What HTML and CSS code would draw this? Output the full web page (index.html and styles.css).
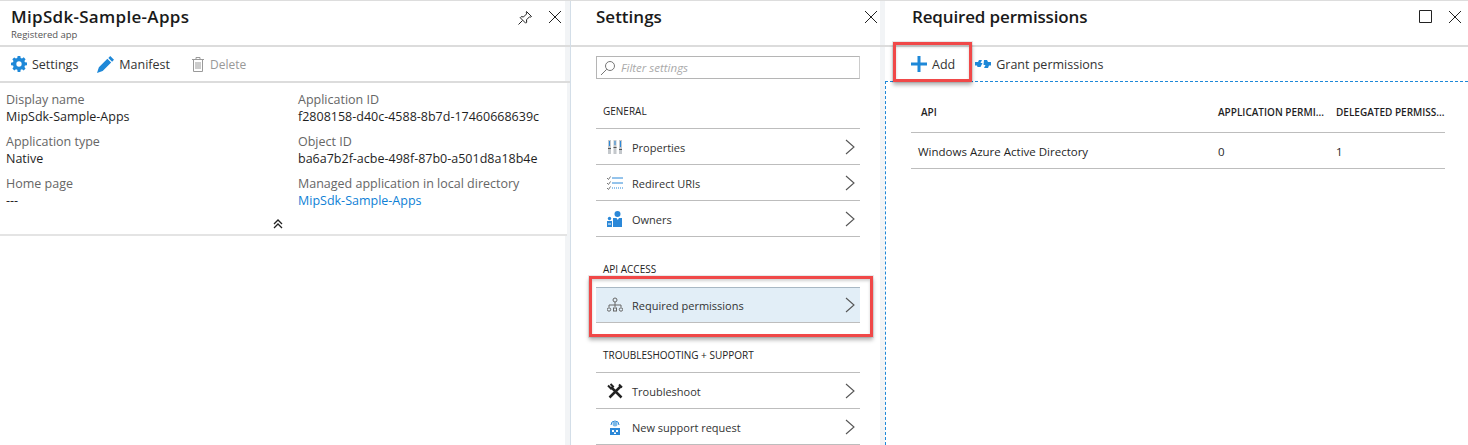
FILE: index.html
```html
<!DOCTYPE html>
<html lang="en">
<head>
  <meta charset="UTF-8">
  <title>Required permissions</title>
  <link rel="stylesheet" href="styles.css">
</head>
<body>
  <div class="blades">
    <!-- app blade -->
    <section class="blade blade-app">
      <header class="blade-head">
        <div>
          <h2 class="title title-app">MipSdk-Sample-Apps</h2>
          <div class="subtitle">Registered app</div>
        </div>
        <div class="head-icons">
          <svg width="16" height="16" viewBox="0 0 16 16" fill="none" stroke="#222" stroke-width="1"><path d="M9.500 1.500l5 5-1 .6-1-.3-3 3 .2 2.400-1 1-5.500-5.500 1-1 2.400.2 3-3-.3-1zM5.500 10.500L1.500 14.500"/></svg>
          <svg width="14" height="14" viewBox="0 0 14 14" stroke="#222" stroke-width="1"><path d="M1 1l12 12M13 1L1 13"/></svg>
        </div>
      </header>
      <div class="toolbar">
        <span class="tool">
          <svg width="16" height="16" viewBox="0 0 18 18"><path fill="#1e88d8" fill-rule="evenodd" d="M7.500 0h3l.4 2.200 1.500.6 1.900-1.300 2.100 2.100-1.300 1.900.6 1.500 2.300.4v3l-2.300.4-.6 1.500 1.300 1.900-2.100 2.100-1.900-1.300-1.500.6-.4 2.300h-3l-.4-2.300-1.500-.6-1.900 1.300-2.100-2.100 1.300-1.900-.6-1.500L0 10.500v-3l2.200-.4.6-1.500L1.500 3.700l2.100-2.100 1.900 1.300 1.500-.6zM9 6a3 3 0 1 0 0 6 3 3 0 0 0 0-6z"/></svg>
          Settings
        </span>
        <span class="tool">
          <svg width="17" height="17" viewBox="0 0 18 18"><path fill="#1e88d8" d="M14 0l4 4-2 2-4-4zM11 3l4 4-9 9-6 2 2-6z"/></svg>
          Manifest
        </span>
        <span class="tool tool-off">
          <svg width="12" height="15" viewBox="0 0 12 15" fill="none" stroke="#9a9a9a"><path d="M0 2.500h12M4 2.500v-2h4v2M1.500 2.500v12h9v-12M4 5v7M6 5v7M8 5v7"/></svg>
          Delete
        </span>
      </div>
      <div class="essentials">
        <div class="field"><div class="label">Display name</div><div class="value">MipSdk-Sample-Apps</div></div>
        <div class="field"><div class="label">Application ID</div><div class="value">f2808158-d40c-4588-8b7d-17460668639c</div></div>
        <div class="field"><div class="label">Application type</div><div class="value">Native</div></div>
        <div class="field"><div class="label">Object ID</div><div class="value">ba6a7b2f-acbe-498f-87b0-a501d8a18b4e</div></div>
        <div class="field"><div class="label">Home page</div><div class="value">---</div></div>
        <div class="field"><div class="label">Managed application in local directory</div><div class="value link">MipSdk-Sample-Apps</div></div>
        <svg class="collapse" width="10" height="10" viewBox="0 0 10 10" fill="none" stroke="#222" stroke-width="1.300"><path d="M1 5l4-4 4 4M1 9l4-4 4 4"/></svg>
      </div>
    </section>

    <!-- settings blade -->
    <section class="blade blade-settings">
      <header class="blade-head">
        <h2 class="title">Settings</h2>
        <div class="head-icons">
          <svg width="14" height="14" viewBox="0 0 14 14" stroke="#222" stroke-width="1"><path d="M1 1l12 12M13 1L1 13"/></svg>
        </div>
      </header>
      <div class="settings-body">
        <div class="filter">
          <svg width="16" height="16" viewBox="0 0 16 16" fill="none" stroke="#777"><circle cx="10" cy="6" r="4.500"/><path d="M6.800 9.200L1 15"/></svg>
          <span>Filter settings</span>
        </div>
        <div class="group-label">GENERAL</div>
        <div class="menu-row line-top">
          <svg width="16" height="16" viewBox="0 0 16 16"><path fill="#c4c8cc" d="M1 1h3v14h-3zM6.500 1h3v14h-3zM12 1h3v14h-3z"/><path fill="#2b88d8" d="M2 2h1v5h-1zM7.500 2h1v4h-1zM13 2h1v6h-1z"/><path fill="#555" d="M1 9h3v1h-3zM6.500 8h3v1h-3zM12 10h3v1h-3z"/></svg>
          <span>Properties</span>
          <svg class="chev" width="10" height="16" viewBox="0 0 10 16" fill="none" stroke="#555" stroke-width="1.100"><path d="M1 1l8 7-8 7"/></svg>
        </div>
        <div class="menu-row">
          <svg width="16" height="14" viewBox="0 0 16 14" fill="none"><path stroke="#2b88d8" d="M5 2h11M5 7h11"/><path stroke="#2b88d8" stroke-dasharray="1 1" d="M5 12h11"/><path stroke="#777" d="M0 2l1.500 1.500L3.500.500M0 7l1.500 1.500 2-3M0 12l1.500 1.500 2-3"/></svg>
          <span>Redirect URIs</span>
          <svg class="chev" width="10" height="16" viewBox="0 0 10 16" fill="none" stroke="#555" stroke-width="1.100"><path d="M1 1l8 7-8 7"/></svg>
        </div>
        <div class="menu-row">
          <svg width="16" height="16" viewBox="0 0 16 16" fill="#2b88d8"><circle cx="10.500" cy="3" r="3"/><path d="M6 7h9v9h-9zM0 10h5v6h-5z"/><circle cx="2.500" cy="7.500" r="1.700"/><path fill="#fff" d="M9.500 7h2.500l-1.200 2zM1 12.500h3v1h-3z"/></svg>
          <span>Owners</span>
          <svg class="chev" width="10" height="16" viewBox="0 0 10 16" fill="none" stroke="#555" stroke-width="1.100"><path d="M1 1l8 7-8 7"/></svg>
        </div>
        <div class="group-label group-api">API ACCESS</div>
        <div class="menu-wrap">
          <div class="menu-row is-active">
            <svg width="16" height="16" viewBox="0 0 16 16" fill="none" stroke="#666"><circle cx="8" cy="3" r="2"/><path d="M8 5v5M2 10V8h12v2"/><circle cx="2" cy="12.500" r="1.700"/><rect x="6.500" y="11" width="3" height="3"/><circle cx="14" cy="12.500" r="1.700"/></svg>
            <span>Required permissions</span>
            <svg class="chev" width="10" height="16" viewBox="0 0 10 16" fill="none" stroke="#555" stroke-width="1.100"><path d="M1 1l8 7-8 7"/></svg>
          </div>
        </div>
        <div class="group-label">TROUBLESHOOTING + SUPPORT</div>
        <div class="menu-row line-top">
          <svg width="16" height="16" viewBox="0 0 16 16" fill="none" stroke="#222"><path stroke-width="2.500" d="M5 5l9.500 9.500M14 3L2.500 14.500"/><path stroke-width="2" d="M1 2.500l3 3 2-2-2.500-2.500M12 1.500l3 3"/></svg>
          <span>Troubleshoot</span>
          <svg class="chev" width="10" height="16" viewBox="0 0 10 16" fill="none" stroke="#555" stroke-width="1.100"><path d="M1 1l8 7-8 7"/></svg>
        </div>
        <div class="menu-row">
          <svg width="16" height="16" viewBox="0 0 16 16"><path fill="none" stroke="#2b88d8" d="M4 6a4 4 0 0 1 8 0"/><circle cx="8" cy="5" r="2.500" fill="#7ab8e8"/><path fill="#2b88d8" d="M3 9h10v7h-10z"/><path fill="#fff" d="M5 11h2v2h-2zM9 11h2v2h-2zM7 13.500h2v1.500h-2z"/></svg>
          <span>New support request</span>
          <svg class="chev" width="10" height="16" viewBox="0 0 10 16" fill="none" stroke="#555" stroke-width="1.100"><path d="M1 1l8 7-8 7"/></svg>
        </div>
      </div>
    </section>

    <!-- permissions blade -->
    <section class="blade blade-perms">
      <header class="blade-head">
        <h2 class="title">Required permissions</h2>
        <div class="head-icons">
          <svg width="13" height="13" viewBox="0 0 13 13" fill="none" stroke="#222"><path d="M.5.500h12v12h-12z"/></svg>
          <svg width="14" height="14" viewBox="0 0 14 14" stroke="#222" stroke-width="1"><path d="M1 1l12 12M13 1L1 13"/></svg>
        </div>
      </header>
      <div class="toolbar toolbar-perms">
        <span class="tool">
          <svg width="16" height="16" viewBox="0 0 16 16"><path fill="#1e88d8" d="M6.500 0h3v6.500h6.500v3h-6.500v6.500h-3v-6.500h-6.500v-3h6.500z"/></svg>
          Add
        </span>
        <span class="tool">
          <svg width="16" height="10" viewBox="0 0 16 10"><path fill="#1e88d8" d="M0 3h3l1-2h3l-1.500 3h2l-2 4h-3l-.5-1.500h-2zM9 1h3l1 2h3v3.500h-2l-1 2.500h-4l1.500-3h-2z"/></svg>
          Grant permissions
        </span>
      </div>
      <div class="perm-table">
        <div class="perm-row perm-head">
          <div class="cell-api">API</div>
          <div>APPLICATION PERMI...</div>
          <div>DELEGATED PERMISS...</div>
        </div>
        <div class="perm-row perm-data">
          <div>Windows Azure Active Directory</div>
          <div>0</div>
          <div>1</div>
        </div>
      </div>
    </section>
  </div>

  <!-- red callouts over the screenshot -->
  <div class="callout callout-req"></div>
  <div class="callout callout-add"></div>
</body>
</html>
```

FILE: styles.css
```css
html, body {
  margin: 0;
  height: 445px;
  overflow: hidden;
}
body {
  position: relative;
  background: #fff;
  color: #1f1f1f;
  font-family: 'Open Sans', sans-serif;
  font-size: 12.5px;
  border-top: 1px solid #ddd;
  box-sizing: border-box;
}
.blades {
  display: flex;
  height: 444px;
}
.blade {
  flex: none;
  box-sizing: border-box;
}
.blade-app {
  width: 571px;
  border-right: 1px solid #d3dee8;
  box-shadow: inset -5px 0 0 #f2f4f6;
}
.blade-settings {
  width: 314px;
  box-shadow: inset -5px 0 0 #f2f4f6;
}
.blade-perms {
  width: 583px;
  display: flex;
  flex-direction: column;
}

.blade-head {
  height: 46px;
  display: flex;
  justify-content: space-between;
  box-sizing: border-box;
  border-bottom: 2px solid #dcdcdc;
  padding: 6px 8px 0 11px;
}
.blade-settings .blade-head { padding: 6px 7px 0 25px; }
.blade-perms .blade-head { padding: 6px 6px 0 27px; }
.blade-perms .head-icons { gap: 16px; }
.blade-perms .title { letter-spacing: -0.15px; }
.title {
  margin: 0;
  font-size: 17px;
  line-height: 20px;
  font-weight: 600;
  color: #1a1a1a;
}
.title-app { letter-spacing: 0.3px; }
.subtitle {
  font-size: 9.500px;
  line-height: 13px;
  color: #555;
  margin-top: 1px;
}
.head-icons {
  display: flex;
  gap: 15px;
  padding-top: 3px;
  align-items: flex-start;
}

.toolbar {
  height: 36px;
  display: flex;
  align-items: center;
  gap: 19px;
  padding-left: 11px;
  border-bottom: 2px solid #dcdcdc;
  box-sizing: border-box;
  color: #333;
}
.tool {
  display: flex;
  align-items: center;
  gap: 5px;
}
.tool-off {
  color: #999;
  font-size: 12px;
  gap: 6px;
  margin-left: 3px;
}
.toolbar-perms {
  height: 34px;
  padding-left: 26px;
  gap: 20px;
  border-bottom: 0;
}

.essentials {
  display: grid;
  grid-template-columns: 292px 1fr;
  align-content: start;
  padding: 8px 0 0 6px;
  margin-right: 3px;
  border-bottom: 2px solid #e4e4e4;
  line-height: 17px;
  row-gap: 8px;
  height: 153px;
  box-sizing: border-box;
  background: #fff;
}
.label { color: #666; }
.value { color: #1f1f1f; }
.link { color: #0e7fd6; }
.collapse {
  position: absolute;
  left: 273px;
  top: 218px;
}

.settings-body {
  padding: 9px 25px 0 25px;
  font-size: 11px;
}
.filter {
  height: 23px;
  border: 1px solid #b5b5b5;
  border-right-color: #ccc;
  box-sizing: border-box;
  display: flex;
  align-items: center;
  gap: 5px;
  padding-left: 3px;
  font-style: italic;
  font-size: 11.500px;
  color: #aaa;
}
.group-label {
  font-size: 10px;
  line-height: 14px;
  padding-left: 7px;
  margin-top: 25px;
  height: 24px;
  color: #222;
}
.group-api { height: 14px; }
.menu-row {
  height: 36px;
  display: flex;
  align-items: center;
  gap: 9px;
  padding: 0 5px 0 11px;
  border-bottom: 1px solid #bdbdbd;
  box-sizing: border-box;
  color: #333;
}
.menu-row > span {
  flex: 1;
  padding-top: 1px;
}
.line-top {
  height: 37px;
  border-top: 1px solid #bdbdbd;
}
.menu-wrap {
  height: 47px;
  padding-top: 11px;
  box-sizing: border-box;
}
.is-active {
  background: #e2eef7;
  border-top: 1px solid #a9b8c4;
}

.perm-table {
  flex: 1;
  padding: 14px 23px 0 25px;
  border-top: 1px dashed #1e88d8;
  border-left: 1px dashed #1e88d8;
  font-size: 11.500px;
}
.perm-row {
  display: grid;
  grid-template-columns: 300px 118px 1fr;
  height: 36px;
  align-items: center;
  padding-left: 7px;
  border-bottom: 1px solid #bdbdbd;
  white-space: nowrap;
  box-sizing: border-box;
}
.perm-data { padding-top: 2px; }
.perm-head {
  font-size: 10px;
  font-weight: 600;
  padding-bottom: 4px;
  height: 37px;
}
.cell-api { padding-left: 3px; }

.callout {
  position: absolute;
  box-sizing: border-box;
  border: 3px solid #f04848;
  box-shadow: 0 3px 4px rgba(0, 0, 0, 0.3), 0 0 0 1px rgba(0, 0, 0, 0.08), inset 0 2px 3px rgba(0, 0, 0, 0.18);
}
.callout-req {
  left: 589px;
  top: 275px;
  width: 284px;
  height: 61px;
}
.callout-add {
  left: 893px;
  top: 41px;
  width: 79px;
  height: 40px;
}
```
